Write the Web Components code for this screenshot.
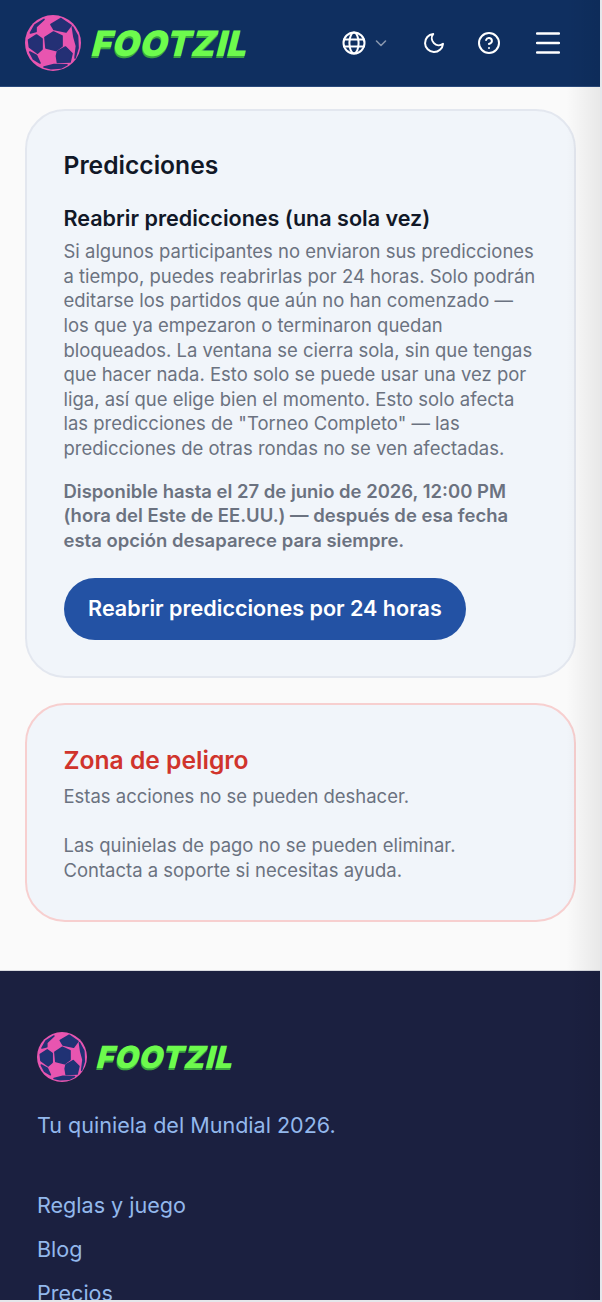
<!DOCTYPE html>
<html lang="es">
<head>
<meta charset="utf-8">
<title>Footzil</title>
<style>
  html, body { margin: 0; padding: 0; }
  body { width: 600px; height: 1300px; overflow: hidden; background: #e5e7eb; font-family: Inter, "Liberation Sans", sans-serif; }
</style>
</head>
<body>
<foot-shell>
  <foot-header slot="header"></foot-header>
  <foot-card>
    <h-title slot="title">Predicciones</h-title>
    <foot-reopen></foot-reopen>
  </foot-card>
  <foot-card danger>
    <h-title slot="title" danger>Zona de peligro</h-title>
    <foot-danger></foot-danger>
  </foot-card>
  <foot-footer slot="footer"></foot-footer>
</foot-shell>

<script>
// pink disc with the blue panels laid over it
const ball = (size, fill) => `
  <svg width="${size}" height="${size}" viewBox="0 0 56 56" aria-hidden="true">
    <circle cx="28" cy="28" r="28" fill="#e855b0"/>
    <g fill="${fill}" stroke="${fill}" stroke-width="1.7" stroke-linejoin="round">
      <polygon points="20,22.5 28.5,17 37,21 37,31 31,35.5 21,33"/>
      <polygon points="26,9.5 36,3.6 46,10.5 41,17 29,14.5"/>
      <polygon points="3.6,25 11.5,20 17,24 17,34 12.5,38 4.4,32"/>
      <polygon points="32.5,36.5 40.5,32 47,38.5 45,47 32.5,47.5 31.5,41"/>
      <polygon points="19,52 29,49.5 42,49.8 36,53 26,53.6"/>
      <polygon points="5.5,18 10,10 19,4.5 11,12 11,16.5"/>
      <polygon points="47.5,12 52.5,21 53,33 50,43 51.5,31 49,22"/>
      <polygon points="4.8,37 11.5,40.5 15,48 8.5,44"/>
    </g>
  </svg>`;

// the wordmark stays real text, heavy and slanted with a dark under-edge
class FootLogo extends HTMLElement {
  constructor () {
    super();
    const size = this.getAttribute('size') || 56;
    const font = this.getAttribute('font') || 34;
    const gap = this.getAttribute('gap') || 11;
    const fill = this.getAttribute('ball') || '#243075';
    this.attachShadow({ mode: 'open' }).innerHTML = `
    <style>
      :host { display: flex; align-items: center; gap: ${gap}px; }
      svg { display: block; flex: none; }
      span {
        font: 900 ${font}px/1 Inter, "Liberation Sans", sans-serif;
        color: #6dfb4d;
        letter-spacing: 0.6px;
        transform: skewX(-14deg);
        text-shadow: 0 2px 0 #3aa53f;
      }
    </style>
    ${ball(size, fill)}<span>FOOTZIL</span>`;
  }
}
customElements.define('foot-logo', FootLogo);

class FootHeader extends HTMLElement {
  constructor () {
    super();
    this.attachShadow({ mode: 'open' }).innerHTML = `
    <style>
      :host { display: flex; align-items: center; justify-content: space-between; height: 86px; padding: 0 40px 0 25px; background: #0f2f60; border-bottom: 1px solid #2a4a7c; flex: none; }
      nav { display: flex; align-items: center; }
      svg { display: block; fill: none; stroke: #fff; stroke-width: 2; stroke-linecap: round; stroke-linejoin: round; }
      .chev { stroke: #8796ad; margin: 0 0 0 9px; }
      .moon { margin-left: 35px; }
      .help { margin-left: 31px; }
      .menu { margin-left: 35px; }
    </style>
    <foot-logo size="56" font="35" gap="12"></foot-logo>
    <nav>
      <svg width="24" height="24" viewBox="0 0 24 24"><circle cx="12" cy="12" r="10.5"/><ellipse cx="12" cy="12" rx="4.6" ry="10.5"/><path d="M2 8.5h20M2 15.5h20"/></svg>
      <svg class="chev" width="12" height="12" viewBox="0 0 12 12" style="stroke-width:1.6"><path d="M1.5 4l4.5 4.5L10.5 4"/></svg>
      <svg class="moon" width="24" height="24" viewBox="0 0 24 24"><path d="M21 12.79A9 9 0 1 1 11.21 3 7 7 0 0 0 21 12.79z"/></svg>
      <svg class="help" width="24" height="24" viewBox="0 0 24 24"><circle cx="12" cy="12" r="10"/><path d="M9.09 9a3 3 0 0 1 5.83 1c0 2-3 3-3 3"/><path d="M12 17h.01"/></svg>
      <svg class="menu" width="24" height="24" viewBox="0 0 24 24" style="stroke-width:2.4"><path d="M1 2.5h22M1 12h22M1 21.5h22"/></svg>
    </nav>`;
  }
}
customElements.define('foot-header', FootHeader);

class HTitle extends HTMLElement {
  constructor () {
    super();
    this.attachShadow({ mode: 'open' }).innerHTML = `
    <style>
      :host { display: block; font: 600 24.64px/32px Inter, "Liberation Sans", sans-serif; color: #111827; }
      :host([danger]) { color: #d0342c; }
    </style>
    <slot></slot>`;
  }
}
customElements.define('h-title', HTitle);

class FootCard extends HTMLElement {
  constructor () {
    super();
    this.attachShadow({ mode: 'open' }).innerHTML = `
    <style>
      :host { display: block; background: #f1f5fa; border: 2px solid #e3e7ef; border-radius: 40px; padding: 38px 36.5px 36px 36.5px; }
      :host([danger]) { border-color: #f7cfcf; padding-top: 39px; padding-bottom: 37px; }
    </style>
    <slot name="title"></slot>
    <slot></slot>`;
  }
}
customElements.define('foot-card', FootCard);

class FootReopen extends HTMLElement {
  constructor () {
    super();
    this.attachShadow({ mode: 'open' }).innerHTML = `
    <style>
      :host { display: block; }
      h3 { margin: 23px 0 7px; font: 600 21.56px/28px Inter, "Liberation Sans", sans-serif; color: #111827; }
      p { margin: 0; font: 400 18.48px/24.64px Inter, "Liberation Sans", sans-serif; color: #6b7280; }
      p.until { margin-top: 18px; font-weight: 600; }
      button { display: block; margin-top: 25px; height: 62px; padding: 0 24.6px; border: 0; border-radius: 31px; background: #2352a4; color: #fff; font: 600 21.56px/1 Inter, "Liberation Sans", sans-serif; }
    </style>
    <h3>Reabrir predicciones (una sola vez)</h3>
    <p>Si algunos participantes no enviaron sus predicciones a tiempo, puedes reabrirlas por 24 horas. Solo podrán editarse los partidos que aún no han comenzado — los que ya empezaron o terminaron quedan bloqueados. La ventana se cierra sola, sin que tengas que hacer nada. Esto solo se puede usar una vez por liga, así que elige bien el momento. Esto solo afecta las predicciones de "Torneo Completo" — las predicciones de otras rondas no se ven afectadas.</p>
    <p class="until">Disponible hasta el 27 de junio de 2026, 12:00 PM (hora del Este de EE.UU.) — después de esa fecha esta opción desaparece para siempre.</p>
    <button type="button">Reabrir predicciones por 24 horas</button>`;
  }
}
customElements.define('foot-reopen', FootReopen);

class FootDanger extends HTMLElement {
  constructor () {
    super();
    this.attachShadow({ mode: 'open' }).innerHTML = `
    <style>
      :host { display: block; margin-top: 8px; font: 400 18.48px/24.64px Inter, "Liberation Sans", sans-serif; color: #6b7280; }
      p { margin: 0; }
      p + p { margin-top: 25px; }
    </style>
    <p>Estas acciones no se pueden deshacer.</p>
    <p>Las quinielas de pago no se pueden eliminar. Contacta a soporte si necesitas ayuda.</p>`;
  }
}
customElements.define('foot-danger', FootDanger);

class FootFooter extends HTMLElement {
  constructor () {
    super();
    this.attachShadow({ mode: 'open' }).innerHTML = `
    <style>
      :host { display: block; background: #1b2040; padding: 61px 37px 0; height: 330px; box-sizing: border-box; border-top: 1px solid #d9dbe0; flex: none; font: 400 21.56px/28px Inter, "Liberation Sans", sans-serif; color: #93b8ec; overflow: hidden; }
      p { margin: 29px 0 52px; }
      a { display: block; color: inherit; text-decoration: none; margin-bottom: 16px; }
    </style>
    <foot-logo size="50" font="30.5" gap="11" ball="#203274"></foot-logo>
    <p>Tu quiniela del Mundial 2026.</p>
    <a href="#">Reglas y juego</a>
    <a href="#">Blog</a>
    <a href="#">Precios</a>`;
  }
}
customElements.define('foot-footer', FootFooter);

class FootShell extends HTMLElement {
  constructor () {
    super();
    this.attachShadow({ mode: 'open' }).innerHTML = `
    <style>
      :host { display: flex; flex-direction: column; width: 600px; height: 1300px; overflow: hidden; background: #fafafa; position: relative; }
      main { flex: 1; display: flex; flex-direction: column; gap: 25px; padding: 22px 24.5px 0 25px; min-height: 0; }
      .edge { position: absolute; top: 0; right: 0; bottom: 0; width: 34px; pointer-events: none; background: linear-gradient(to right, rgba(0,0,0,0), rgba(0,0,0,.07)); }
    </style>
    <slot name="header"></slot>
    <main><slot></slot></main>
    <slot name="footer"></slot>
    <div class="edge"></div>`;
  }
}
customElements.define('foot-shell', FootShell);
</script>
</body>
</html>
